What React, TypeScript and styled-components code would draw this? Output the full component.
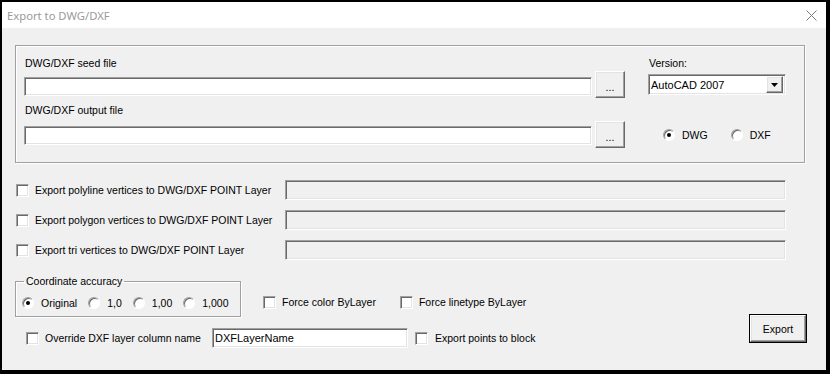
import styled, { createGlobalStyle } from "styled-components";

const GlobalStyle = createGlobalStyle`
    body {
        margin: 0;
        background: #000000;
    }
`;

const Dialog = styled.div`
    display: flex;
    flex-direction: column;
    width: 824px;
    height: 368px;
    margin: 2px 0 0 2px;
    background: #f0f0f0;
    font-family: "Liberation Sans", Arial, sans-serif;
    font-size: 10.5px;
    color: #000000;
`;

const TitleBar = styled.div`
    display: flex;
    align-items: center;
    justify-content: space-between;
    height: 26px;
    padding: 0 9px 0 5px;
    background: #ffffff;
`;

const Title = styled.div`
    font-family: "Noto Sans", sans-serif;
    font-size: 11.25px;
    color: #9a9a9a;
`;

const Content = styled.div`
    display: flex;
    flex-direction: column;
    padding: 17px 20px 0 13px;
`;

const FileGroup = styled.div`
    display: flex;
    width: 790px;
    box-sizing: border-box;
    padding: 11px 0 14px 8px;
    border: 1px solid #a0a0a0;
    box-shadow: inset 1px 1px 0 #ffffff, 1px 1px 0 #ffffff;
`;

const FileColumn = styled.div`
    display: flex;
    flex-direction: column;
    width: 601px;
`;

const FieldLabel = styled.div<{ $top?: number }>`
    height: 13px;
    line-height: 13px;
    margin-top: ${(p) => p.$top ?? 0}px;
    padding-left: 1px;
`;

const PathRow = styled.div<{ $top: number }>`
    display: flex;
    gap: 3px;
    height: 27px;
    margin-top: ${(p) => p.$top}px;
`;

const Sunken = styled.div`
    box-sizing: border-box;
    border-style: solid;
    border-width: 1px;
    border-color: #a0a0a0 #ffffff #ffffff #a0a0a0;
    box-shadow: inset 1px 1px 0 #696969, inset -1px -1px 0 #e3e3e3;
`;

const PathInput = styled(Sunken)<{ $top: number }>`
    width: 568px;
    height: 19px;
    margin-top: ${(p) => p.$top}px;
    background: #ffffff;
`;

const Raised = styled.button`
    box-sizing: border-box;
    padding: 0;
    font-family: "Liberation Sans", Arial, sans-serif;
    font-size: 10.5px;
    color: #000000;
    background: #f0f0f0;
    border-style: solid;
    border-width: 1px;
    border-color: #ffffff #696969 #696969 #ffffff;
    box-shadow: inset -1px -1px 0 #a0a0a0, inset 1px 1px 0 #e3e3e3;
`;

const BrowseButton = styled(Raised)`
    width: 30px;
    height: 27px;
    padding-top: 4px;
`;

const VersionColumn = styled.div`
    display: flex;
    flex-direction: column;
    width: 138px;
    margin-left: 23px;
`;

const Select = styled(Sunken)`
    display: flex;
    align-items: center;
    justify-content: space-between;
    height: 21px;
    margin-top: 4px;
    padding: 0 2px 0 2px;
    background: #ffffff;
    font-size: 11px;
`;

const SelectArrow = styled(Raised)`
    display: flex;
    align-items: center;
    justify-content: center;
    width: 17px;
    height: 17px;
`;

const RadioRow = styled.div<{ $top: number; $left: number; $gap: number }>`
    display: flex;
    align-items: center;
    gap: ${(p) => p.$gap}px;
    height: 14px;
    margin-top: ${(p) => p.$top}px;
    padding-left: ${(p) => p.$left}px;
`;

const Option = styled.label<{ $gap?: number }>`
    display: flex;
    align-items: center;
    gap: ${(p) => p.$gap ?? 6}px;
    white-space: nowrap;
`;

const RadioDot = styled.span<{ $on?: boolean }>`
    position: relative;
    box-sizing: border-box;
    width: 12px;
    height: 12px;
    border-radius: 50%;
    border: 1px solid;
    border-color: #a0a0a0 #ffffff #ffffff #a0a0a0;
    background: #ffffff;
    box-shadow: inset 1px 1px 0 #696969;

    &::after {
        content: "";
        display: ${(p) => (p.$on ? "block" : "none")};
        position: absolute;
        left: 3px;
        top: 3px;
        width: 4px;
        height: 4px;
        border-radius: 50%;
        background: #000000;
    }
`;

const CheckBox = styled(Sunken)`
    width: 13px;
    height: 13px;
    background: #ffffff;
`;

const LayerRows = styled.div`
    display: flex;
    flex-direction: column;
    gap: 10px;
    margin-top: 17px;
    padding-left: 1px;
`;

const LayerRow = styled.div`
    display: grid;
    grid-template-columns: 13px 244px 501px;
    column-gap: 6px;
    align-items: center;
    height: 20px;
    white-space: nowrap;
`;

const LayerField = styled(Sunken)`
    height: 20px;
    background: #f0f0f0;
`;

const BottomArea = styled.div`
    display: flex;
    margin-top: 15px;
`;

const BottomColumn = styled.div`
    display: flex;
    flex-direction: column;
`;

const OptionsRow = styled.div`
    display: flex;
    align-items: flex-end;
`;

const AccuracyGroup = styled.fieldset`
    width: 226px;
    box-sizing: border-box;
    margin: 0;
    padding: 8px 0 6px 6px;
    border: 1px solid #a0a0a0;
    box-shadow: inset 1px 1px 0 #ffffff, 1px 1px 0 #ffffff;
`;

const AccuracyLegend = styled.legend`
    margin-left: 2px;
    padding: 0 2px;
    line-height: 13px;
`;

const ForceOptions = styled.div`
    display: flex;
    gap: 24px;
    height: 14px;
    margin: 0 0 8px 22px;
`;

const OverrideRow = styled.div`
    display: flex;
    align-items: center;
    height: 20px;
    margin-top: 11px;
    padding-left: 11px;
`;

const OverrideLabel = styled(Option)`
    width: 186px;
`;

const NameInput = styled(Sunken)`
    width: 196px;
    height: 20px;
    margin-right: 7px;
    padding: 3px 0 0 2px;
    background: #ffffff;
    font-size: 11px;
`;

const ExportButton = styled(Raised)`
    width: 56px;
    height: 27px;
    margin: 40px 0 0 auto;
    outline: 1px solid #000000;
    outline-offset: 0;
`;

function CloseIcon() {
    return (
        <svg width="11" height="11" viewBox="0 0 11 11">
            <path d="M0.5 0.5 L10.5 10.5 M10.5 0.5 L0.5 10.5" stroke="#7a7a7a" strokeWidth="1" fill="none" />
        </svg>
    );
}

const layerRows = [
    "Export polyline vertices to DWG/DXF POINT Layer",
    "Export polygon vertices to DWG/DXF POINT Layer",
    "Export tri vertices to DWG/DXF POINT Layer",
];

const accuracies = ["Original", "1,0", "1,00", "1,000"];

function App() {
    return (
        <>
            <GlobalStyle />
            <Dialog>
                <TitleBar>
                    <Title>Export to DWG/DXF</Title>
                    <CloseIcon />
                </TitleBar>
                <Content>
                    <FileGroup>
                        <FileColumn>
                            <FieldLabel>DWG/DXF seed file</FieldLabel>
                            <PathRow $top={1}>
                                <PathInput $top={6} />
                                <BrowseButton>...</BrowseButton>
                            </PathRow>
                            <FieldLabel $top={6}>DWG/DXF output file</FieldLabel>
                            <PathRow $top={4}>
                                <PathInput $top={5} />
                                <BrowseButton>...</BrowseButton>
                            </PathRow>
                        </FileColumn>
                        <VersionColumn>
                            <FieldLabel>Version:</FieldLabel>
                            <Select>
                                <span>AutoCAD 2007</span>
                                <SelectArrow>
                                    <svg width="7" height="4" viewBox="0 0 7 4">
                                        <path d="M0 0 H7 L3.5 4 Z" fill="#000000" />
                                    </svg>
                                </SelectArrow>
                            </Select>
                            <RadioRow $top={33} $left={15} $gap={23}>
                                <Option $gap={7}>
                                    <RadioDot $on />
                                    DWG
                                </Option>
                                <Option $gap={7}>
                                    <RadioDot />
                                    DXF
                                </Option>
                            </RadioRow>
                        </VersionColumn>
                    </FileGroup>

                    <LayerRows>
                        {layerRows.map((text) => (
                            <LayerRow key={text}>
                                <CheckBox />
                                <span>{text}</span>
                                <LayerField />
                            </LayerRow>
                        ))}
                    </LayerRows>

                    <BottomArea>
                        <BottomColumn>
                            <OptionsRow>
                                <AccuracyGroup>
                                    <AccuracyLegend>Coordinate accuracy</AccuracyLegend>
                                    <RadioRow $top={0} $left={0} $gap={11}>
                                        {accuracies.map((a, i) => (
                                            <Option key={a} $gap={7}>
                                                <RadioDot $on={i === 0} />
                                                {a}
                                            </Option>
                                        ))}
                                    </RadioRow>
                                </AccuracyGroup>
                                <ForceOptions>
                                    <Option>
                                        <CheckBox />
                                        Force color ByLayer
                                    </Option>
                                    <Option>
                                        <CheckBox />
                                        Force linetype ByLayer
                                    </Option>
                                </ForceOptions>
                            </OptionsRow>
                            <OverrideRow>
                                <OverrideLabel>
                                    <CheckBox />
                                    Override DXF layer column name
                                </OverrideLabel>
                                <NameInput>DXFLayerName</NameInput>
                                <Option $gap={7}>
                                    <CheckBox />
                                    Export points to block
                                </Option>
                            </OverrideRow>
                        </BottomColumn>
                        <ExportButton>Export</ExportButton>
                    </BottomArea>
                </Content>
            </Dialog>
        </>
    );
}

export default App;
